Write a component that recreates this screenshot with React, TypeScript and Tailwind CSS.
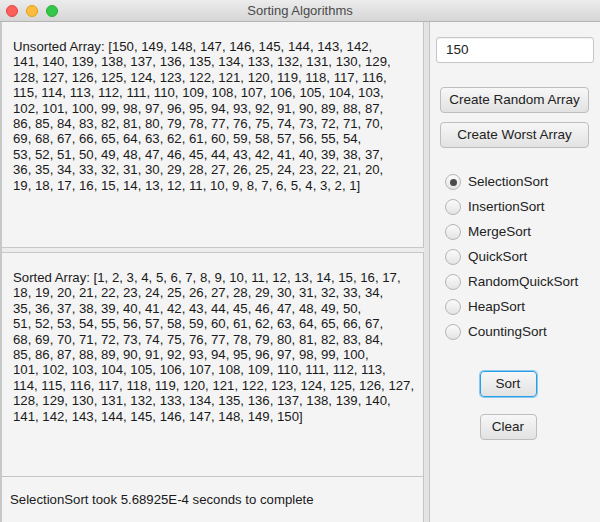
const unsorted = [
  'Unsorted Array: [150, 149, 148, 147, 146, 145, 144, 143, 142,',
  '141, 140, 139, 138, 137, 136, 135, 134, 133, 132, 131, 130, 129,',
  '128, 127, 126, 125, 124, 123, 122, 121, 120, 119, 118, 117, 116,',
  '115, 114, 113, 112, 111, 110, 109, 108, 107, 106, 105, 104, 103,',
  '102, 101, 100, 99, 98, 97, 96, 95, 94, 93, 92, 91, 90, 89, 88, 87,',
  '86, 85, 84, 83, 82, 81, 80, 79, 78, 77, 76, 75, 74, 73, 72, 71, 70,',
  '69, 68, 67, 66, 65, 64, 63, 62, 61, 60, 59, 58, 57, 56, 55, 54,',
  '53, 52, 51, 50, 49, 48, 47, 46, 45, 44, 43, 42, 41, 40, 39, 38, 37,',
  '36, 35, 34, 33, 32, 31, 30, 29, 28, 27, 26, 25, 24, 23, 22, 21, 20,',
  '19, 18, 17, 16, 15, 14, 13, 12, 11, 10, 9, 8, 7, 6, 5, 4, 3, 2, 1]',
];

const sorted = [
  'Sorted Array: [1, 2, 3, 4, 5, 6, 7, 8, 9, 10, 11, 12, 13, 14, 15, 16, 17,',
  '18, 19, 20, 21, 22, 23, 24, 25, 26, 27, 28, 29, 30, 31, 32, 33, 34,',
  '35, 36, 37, 38, 39, 40, 41, 42, 43, 44, 45, 46, 47, 48, 49, 50,',
  '51, 52, 53, 54, 55, 56, 57, 58, 59, 60, 61, 62, 63, 64, 65, 66, 67,',
  '68, 69, 70, 71, 72, 73, 74, 75, 76, 77, 78, 79, 80, 81, 82, 83, 84,',
  '85, 86, 87, 88, 89, 90, 91, 92, 93, 94, 95, 96, 97, 98, 99, 100,',
  '101, 102, 103, 104, 105, 106, 107, 108, 109, 110, 111, 112, 113,',
  '114, 115, 116, 117, 118, 119, 120, 121, 122, 123, 124, 125, 126, 127,',
  '128, 129, 130, 131, 132, 133, 134, 135, 136, 137, 138, 139, 140,',
  '141, 142, 143, 144, 145, 146, 147, 148, 149, 150]',
];

const algorithms = [
  'SelectionSort',
  'InsertionSort',
  'MergeSort',
  'QuickSort',
  'RandomQuickSort',
  'HeapSort',
  'CountingSort',
];

function TextBlock({ lines }: { lines: string[] }) {
  return (
    <div className="pl-[11px] pt-[17px] text-[13.2px] leading-[15.4px] text-[#1a1a1a]">
      {lines.map((l) => (
        <div key={l} className="whitespace-nowrap">
          {l}
        </div>
      ))}
    </div>
  );
}

function MacButton({ label, focused, className }: { label: string; focused?: boolean; className?: string }) {
  return (
    <button
      className={`flex h-[26px] items-center justify-center rounded-[4px] border bg-gradient-to-b from-[#f7f7f7] to-[#e2e2e2] text-[13.5px] text-[#222] ${
        focused ? 'border-[#2a9fe6] shadow-[0_0_0_1px_#8cc8f0]' : 'border-[#bdbdbd]'
      } ${className ?? ''}`}
    >
      {label}
    </button>
  );
}

export default function App() {
  return (
    <div
      className="flex h-[522px] w-[600px] flex-col overflow-hidden bg-[#f4f4f4]"
      style={{ fontFamily: '"Liberation Sans", Arial, sans-serif' }}
    >
      {/* title bar */}
      <div className="relative flex h-[22px] shrink-0 items-center justify-center border-b border-[#b4b4b4] bg-gradient-to-b from-[#ececec] to-[#d6d6d6]">
        <div className="absolute left-[6px] top-[5px] flex gap-[8px]">
          <span className="h-[12px] w-[12px] rounded-full border border-[#e2463f] bg-[#fc605c]" />
          <span className="h-[12px] w-[12px] rounded-full border border-[#e1a116] bg-[#fdbc40]" />
          <span className="h-[12px] w-[12px] rounded-full border border-[#2aac32] bg-[#34c84a]" />
        </div>
        <span className="text-[13px] text-[#4a4a4a]">Sorting Algorithms</span>
      </div>

      <div className="flex min-h-0 flex-1">
        {/* left side */}
        <div className="flex w-[424px] flex-col border-l-2 border-[#c8c8c8]">
          <div className="h-[225px] overflow-hidden border-r border-[#c4c4c4] bg-[#f4f4f4]">
            <TextBlock lines={unsorted} />
          </div>
          <div className="h-[6px] border-y border-[#c8c8c8] bg-[#ececec]" />
          <div className="h-[224px] overflow-hidden border-r border-b border-[#c4c4c4] bg-[#f4f4f4]">
            <TextBlock lines={sorted} />
          </div>
          <div className="flex flex-1 items-center border-r border-[#c4c4c4] pl-[8px] text-[13.2px] text-[#1a1a1a]">
            SelectionSort took 5.68925E-4 seconds to complete
          </div>
        </div>
        <div className="w-[6px] border-r border-[#c4c4c4] bg-[#e4e4e4]" />

        {/* right side */}
        <div className="flex flex-1 flex-col bg-[#f4f4f4] pl-[6px] pr-[6px]">
          <div className="mt-[15px] flex h-[26px] items-center rounded-[3px] border border-[#c6c6c6] bg-white pl-[9px] text-[13.5px] text-[#222] shadow-[inset_0_1px_1px_rgba(0,0,0,0.05)]">
            150
          </div>
          <div className="mt-[24px] flex flex-col gap-[9px] px-[4px]">
            <MacButton label="Create Random Array" className="w-[149px]" />
            <MacButton label="Create Worst Array" className="w-[149px]" />
          </div>
          <div className="mt-[26px] flex flex-col gap-[9px] pl-[9px]">
            {algorithms.map((a, i) => (
              <label key={a} className="flex h-[16px] items-center gap-[7px] text-[13.5px] text-[#222]">
                <span className="flex h-[16px] w-[16px] items-center justify-center rounded-full border border-[#b5b5b5] bg-gradient-to-b from-[#fbfbfb] to-[#e4e4e4]">
                  {i === 0 && <span className="h-[7px] w-[7px] rounded-full bg-[#4a4a4a]" />}
                </span>
                {a}
              </label>
            ))}
          </div>
          <div className="mt-[31px] flex flex-col items-center gap-[17px] pr-[14px]">
            <MacButton label="Sort" focused className="w-[57px]" />
            <MacButton label="Clear" className="w-[57px]" />
          </div>
        </div>
      </div>
    </div>
  );
}
